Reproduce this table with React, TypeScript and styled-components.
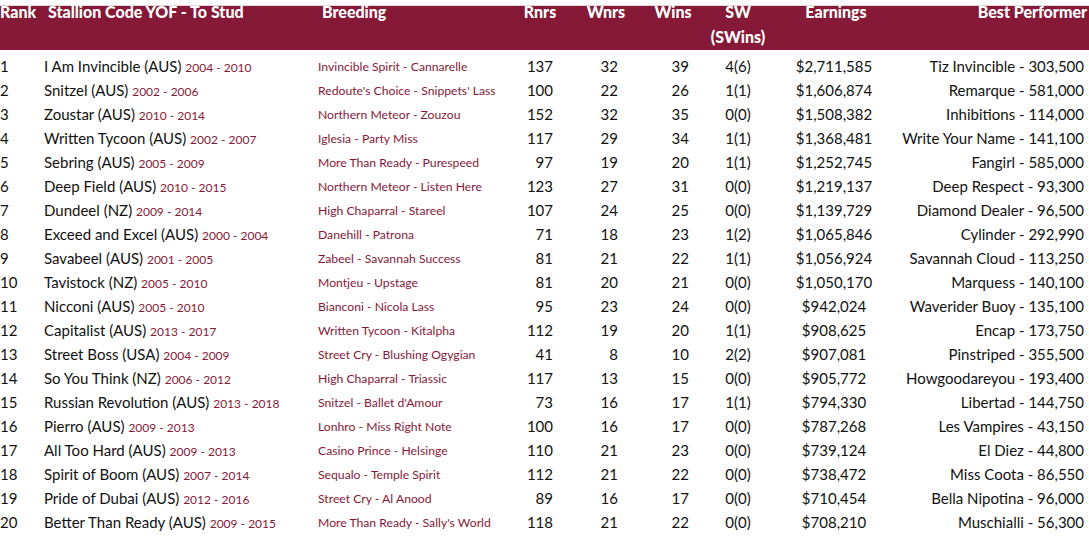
import React from 'react';
import styled, { createGlobalStyle } from 'styled-components';

const GlobalStyle = createGlobalStyle`
  html, body {
    margin: 0;
    padding: 0;
    background: #ffffff;
  }
  body {
    font-family: Lato, "Open Sans", sans-serif;
    color: #111111;
  }
`;

const MAROON = '#861937';

const Page = styled.div`
  width: 1089px;
  padding-top: 5px;
`;

const HeaderRow = styled.div`
  display: grid;
  grid-template-columns: 48px 274px 196px 44px 88px 46px 84px 112px 195px;
  height: 45px;
  background-color: ${MAROON};
  border-top: 1px solid #e2d6da;
  box-sizing: border-box;
  color: #ffffff;
  font-weight: 900;
  font-size: 16px;
  line-height: 25px;
`;

const HeaderCell = styled.div<{ $align?: 'left' | 'center' | 'right' }>`
  text-align: ${p => p.$align || 'left'};
  margin-top: -7px;
  white-space: nowrap;
`;

const Body = styled.div`
  padding-top: 4px;
`;

const Row = styled.div`
  display: grid;
  grid-template-columns: 44px 274px 190px 45px 65px 71px 98px 94px 203px;
  height: 24px;
  align-items: center;
  font-size: 15px;
  white-space: nowrap;
`;

const Cell = styled.div<{ $align?: 'left' | 'center' | 'right' }>`
  text-align: ${p => p.$align || 'left'};
`;

const Years = styled.span`
  color: ${MAROON};
  font-size: 12px;
`;

const Breeding = styled.div`
  color: ${MAROON};
  font-size: 12.2px;
`;

type Stallion = {
  name: string;
  years: string;
  breeding: string;
  rnrs: number;
  wnrs: number;
  wins: number;
  sw: string;
  earnings: string;
  best: string;
};

const stallions: Stallion[] = [
  { name: 'I Am Invincible (AUS)', years: '2004 - 2010', breeding: 'Invincible Spirit - Cannarelle', rnrs: 137, wnrs: 32, wins: 39, sw: '4(6)', earnings: '$2,711,585', best: 'Tiz Invincible - 303,500' },
  { name: 'Snitzel (AUS)', years: '2002 - 2006', breeding: "Redoute's Choice - Snippets' Lass", rnrs: 100, wnrs: 22, wins: 26, sw: '1(1)', earnings: '$1,606,874', best: 'Remarque - 581,000' },
  { name: 'Zoustar (AUS)', years: '2010 - 2014', breeding: 'Northern Meteor - Zouzou', rnrs: 152, wnrs: 32, wins: 35, sw: '0(0)', earnings: '$1,508,382', best: 'Inhibitions - 114,000' },
  { name: 'Written Tycoon (AUS)', years: '2002 - 2007', breeding: 'Iglesia - Party Miss', rnrs: 117, wnrs: 29, wins: 34, sw: '1(1)', earnings: '$1,368,481', best: 'Write Your Name - 141,100' },
  { name: 'Sebring (AUS)', years: '2005 - 2009', breeding: 'More Than Ready - Purespeed', rnrs: 97, wnrs: 19, wins: 20, sw: '1(1)', earnings: '$1,252,745', best: 'Fangirl - 585,000' },
  { name: 'Deep Field (AUS)', years: '2010 - 2015', breeding: 'Northern Meteor - Listen Here', rnrs: 123, wnrs: 27, wins: 31, sw: '0(0)', earnings: '$1,219,137', best: 'Deep Respect - 93,300' },
  { name: 'Dundeel (NZ)', years: '2009 - 2014', breeding: 'High Chaparral - Stareel', rnrs: 107, wnrs: 24, wins: 25, sw: '0(0)', earnings: '$1,139,729', best: 'Diamond Dealer - 96,500' },
  { name: 'Exceed and Excel (AUS)', years: '2000 - 2004', breeding: 'Danehill - Patrona', rnrs: 71, wnrs: 18, wins: 23, sw: '1(2)', earnings: '$1,065,846', best: 'Cylinder - 292,990' },
  { name: 'Savabeel (AUS)', years: '2001 - 2005', breeding: 'Zabeel - Savannah Success', rnrs: 81, wnrs: 21, wins: 22, sw: '1(1)', earnings: '$1,056,924', best: 'Savannah Cloud - 113,250' },
  { name: 'Tavistock (NZ)', years: '2005 - 2010', breeding: 'Montjeu - Upstage', rnrs: 81, wnrs: 20, wins: 21, sw: '0(0)', earnings: '$1,050,170', best: 'Marquess - 140,100' },
  { name: 'Nicconi (AUS)', years: '2005 - 2010', breeding: 'Bianconi - Nicola Lass', rnrs: 95, wnrs: 23, wins: 24, sw: '0(0)', earnings: '$942,024', best: 'Waverider Buoy - 135,100' },
  { name: 'Capitalist (AUS)', years: '2013 - 2017', breeding: 'Written Tycoon - Kitalpha', rnrs: 112, wnrs: 19, wins: 20, sw: '1(1)', earnings: '$908,625', best: 'Encap - 173,750' },
  { name: 'Street Boss (USA)', years: '2004 - 2009', breeding: 'Street Cry - Blushing Ogygian', rnrs: 41, wnrs: 8, wins: 10, sw: '2(2)', earnings: '$907,081', best: 'Pinstriped - 355,500' },
  { name: 'So You Think (NZ)', years: '2006 - 2012', breeding: 'High Chaparral - Triassic', rnrs: 117, wnrs: 13, wins: 15, sw: '0(0)', earnings: '$905,772', best: 'Howgoodareyou - 193,400' },
  { name: 'Russian Revolution (AUS)', years: '2013 - 2018', breeding: "Snitzel - Ballet d'Amour", rnrs: 73, wnrs: 16, wins: 17, sw: '1(1)', earnings: '$794,330', best: 'Libertad - 144,750' },
  { name: 'Pierro (AUS)', years: '2009 - 2013', breeding: 'Lonhro - Miss Right Note', rnrs: 100, wnrs: 16, wins: 17, sw: '0(0)', earnings: '$787,268', best: 'Les Vampires - 43,150' },
  { name: 'All Too Hard (AUS)', years: '2009 - 2013', breeding: 'Casino Prince - Helsinge', rnrs: 110, wnrs: 21, wins: 23, sw: '0(0)', earnings: '$739,124', best: 'El Diez - 44,800' },
  { name: 'Spirit of Boom (AUS)', years: '2007 - 2014', breeding: 'Sequalo - Temple Spirit', rnrs: 112, wnrs: 21, wins: 22, sw: '0(0)', earnings: '$738,472', best: 'Miss Coota - 86,550' },
  { name: 'Pride of Dubai (AUS)', years: '2012 - 2016', breeding: 'Street Cry - Al Anood', rnrs: 89, wnrs: 16, wins: 17, sw: '0(0)', earnings: '$710,454', best: 'Bella Nipotina - 96,000' },
  { name: 'Better Than Ready (AUS)', years: '2009 - 2015', breeding: "More Than Ready - Sally's World", rnrs: 118, wnrs: 21, wins: 22, sw: '0(0)', earnings: '$708,210', best: 'Muschialli - 56,300' },
];

const App: React.FC = () => {
  return (
    <Page>
      <GlobalStyle />
      <HeaderRow>
        <HeaderCell>Rank</HeaderCell>
        <HeaderCell>Stallion Code YOF - To Stud</HeaderCell>
        <HeaderCell>Breeding</HeaderCell>
        <HeaderCell $align="center">Rnrs</HeaderCell>
        <HeaderCell $align="center">Wnrs</HeaderCell>
        <HeaderCell $align="center">Wins</HeaderCell>
        <HeaderCell $align="center">
          SW
          <br />
          (SWins)
        </HeaderCell>
        <HeaderCell $align="center">Earnings</HeaderCell>
        <HeaderCell $align="right">Best Performer</HeaderCell>
      </HeaderRow>
      <Body>
        {stallions.map((s, i) => (
          <Row key={s.name}>
            <Cell>{i + 1}</Cell>
            <Cell>
              {s.name} <Years>{s.years}</Years>
            </Cell>
            <Breeding>{s.breeding}</Breeding>
            <Cell $align="right">{s.rnrs}</Cell>
            <Cell $align="right">{s.wnrs}</Cell>
            <Cell $align="right">{s.wins}</Cell>
            <Cell $align="center">{s.sw}</Cell>
            <Cell $align="center">{s.earnings}</Cell>
            <Cell $align="right">{s.best}</Cell>
          </Row>
        ))}
      </Body>
    </Page>
  );
};

export default App;
